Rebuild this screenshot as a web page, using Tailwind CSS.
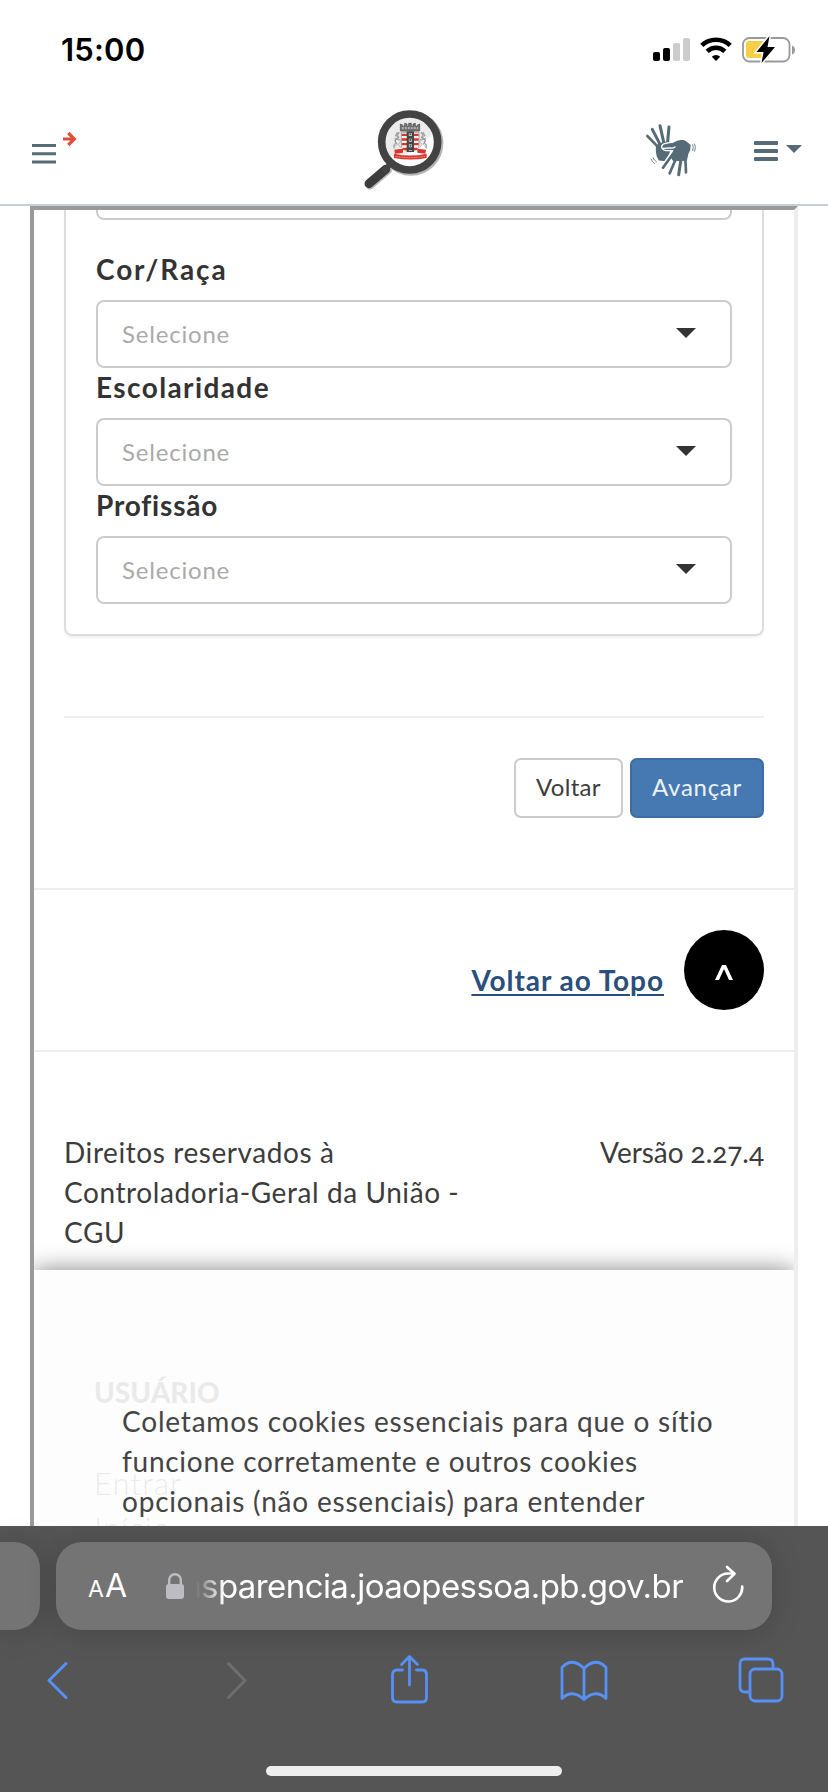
<!DOCTYPE html>
<html lang="pt-BR">
<head>
<meta charset="utf-8">
<title>Transparência</title>
<script src="https://cdn.jsdelivr.net/npm/@tailwindcss/browser@4"></script>
</head>
<body class="w-[828px] h-[1792px] overflow-hidden bg-white font-['Lato',sans-serif] text-[28px] text-[#333]">
<div class="flex flex-col h-full">

  <!-- Status bar -->
  <div class="h-[98px] flex justify-between pl-[61px] pr-[33px] shrink-0">
    <div class="font-['Inter',sans-serif] font-semibold text-[31px] leading-[36px] mt-[32px] text-black tracking-[0.2px]">15:00</div>
    <div class="flex gap-[10px] mt-[36px]">
      <svg class="w-[37px] h-[26px]" viewBox="0 0 37 26"><g><rect x="0" y="16" width="7" height="9" rx="2"/><rect x="10" y="12" width="7" height="13" rx="2"/><rect x="20" y="7" width="7" height="18" rx="2" fill="#ccc"/><rect x="30" y="2" width="7" height="23" rx="2" fill="#ccc"/></g></svg>
      <svg class="w-[32px] h-[26px]" viewBox="0 0 32 26" fill="none" stroke="#000" stroke-width="4.6"><path d="M1.8 9.400a20.500 20.500 0 0 1 28.400 0"/><path d="M7.200 15.400a12.600 12.600 0 0 1 17.600 0"/><path d="M16 25l-4.200-4.200a6 6 0 0 1 8.400 0z" fill="#000" stroke="none"/></svg>
      <svg class="w-[53px] h-[28px]" viewBox="0 0 53 28"><rect x="1" y="2" width="46.500" height="23.500" rx="6.500" fill="none" stroke="#999" stroke-width="1.800"/><path d="M50 9.500q3 1 3 4.500t-3 4.500z" fill="#999"/><path d="M7 5h20v17H7q-3 0-3-3V8q0-3 3-3z" fill="#f7ce46"/><path d="M27.500 0L14.500 16h7L19.500 27 33 11h-7.500z" stroke="#fff" stroke-width="3"/><path d="M27.500 0L14.500 16h7L19.500 27 33 11h-7.500z"/></svg>
    </div>
  </div>

  <!-- Site header -->
  <header class="h-[108px] border-b-2 border-[#c5d0d6] flex items-start pl-[32px] pr-[26px] shrink-0">
    <div class="flex gap-[7px] w-[331px]">
      <svg class="w-[24px] h-[22px] mt-[45px]" viewBox="0 0 24 22" fill="#566b78"><path d="M0 1h24v3H0zM0 9.200h24v3H0zM0 17.500h24v3H0z"/></svg>
      <svg class="w-[14px] h-[16px] mt-[33px]" viewBox="0 0 14 16" fill="none" stroke="#e04f3c" stroke-width="3.200"><path d="M0 8h11M5.300 2l6 6-6 6"/></svg>
    </div>
    <svg class="w-[84px] h-[84px] mt-[10px]" viewBox="38 24 252 252">
      <path d="M59 256L112 210" stroke="#bbb" stroke-width="26" stroke-linecap="round"/>
      <circle cx="182" cy="130" r="85" fill="none" stroke="#b5b5b5" stroke-width="24"/>
      <circle cx="179" cy="126" r="78" fill="#ececec"/>
      <path d="M110 165q70 20 140-70v50a74 74 0 0 1-140 20z" fill="#fff"/>
      <path d="M56 251L106 208" stroke="#3d3d3d" stroke-width="27" stroke-linecap="round"/>
      <path d="M98 212L124 190" stroke="#444" stroke-width="16"/>
      <circle cx="178" cy="126" r="84" fill="none" stroke="#434343" stroke-width="23"/>
      <path d="M150 93V72l7 3v5l6-3v-7l7 2v7h5v-9h8v9h5v-7l7-2v7l6 3v-5l7-3v21z" fill="#777" stroke="#444" stroke-width="2"/>
      <path d="M155 84h48" stroke="#eee" stroke-width="3" stroke-dasharray="5 4"/>
      <path d="M153 97h53v38q0 17-26 20-27-3-27-20z" fill="#fff" stroke="#555" stroke-width="1.500"/>
      <path d="M154 101h51v7h-51zM154 115h51v7h-51zM154 129h51v7h-51zM158 143h43v7h-43z" fill="#df3428"/>
      <path d="M169 94h22v62h-22z" fill="#464646"/>
      <path d="M180 99v54" stroke="#ddd" stroke-width="9" stroke-dasharray="9 8"/>
      <path d="M180 100v52" stroke="#555" stroke-width="5" stroke-dasharray="6 11"/>
      <g fill="none" stroke="#aaa" stroke-width="4"><path d="M148 98q-10 4-3 14-15 5-8 18-10 5-5 15M141 96l-6 13M150 120l-17-5"/><path d="M211 98q10 4 3 14 15 5 8 18 10 5 5 15M218 96l6 13M209 120l17-5"/></g>
      <g fill="none" stroke="#666" stroke-width="1.300"><path d="M146 96l-9 12 9 4-13 9 8 12-9 8M152 123l-8 10 7 10"/><path d="M213 96l9 12-9 4 13 9-8 12 9 8M207 123l8 10-7 10"/></g>
      <path d="M132 149l26-3v12l-24 3zM227 149l-26-3v12l24 3z" fill="#d9352b"/>
      <path d="M131 161q49 11 98 0v13q-49 9-98 0z" fill="#d9352b"/><path d="M136 169q44 8 88 0" fill="none" stroke="#f4b5b0" stroke-width="3" stroke-dasharray="3 2"/>
    </svg>
    <div class="flex items-start ml-auto">
      <svg class="w-[52px] h-[54px] mt-[25px]" viewBox="45 38 156 162" stroke-linecap="round" stroke-linejoin="round">
        <g stroke="#566b78" fill="#566b78" stroke-width="8"><path d="M92 118L52 77"/><path d="M95 112L67 57" stroke-width="9"/><path d="M104 108L90 46" stroke-width="9"/><path d="M112 104L117 50" stroke-width="9"/><path d="M80 106l18-8 18-2 10 12-8 30-12 12-18-2q-8-12-8-26z" stroke-width="5"/></g>
        <g stroke="#fff" fill="#fff" stroke-width="12"><path d="M99 109q1-5 8-6l23-4q16-10 26-8 8-1 13 5l11 9q1 14-7 26l-4 18-38 2-10-12 8-22-20 0q-10-3-10-8z"/><path d="M128 130L99 172" stroke-width="16"/></g>
        <g stroke="#566b78" fill="#566b78" stroke-width="8"><path d="M99 109q1-5 8-6l23-4q16-10 26-8 8-1 13 5l11 9q1 14-7 26l-4 18-38 2-8-12 11-22-25 0q-10-3-10-8z" stroke-width="4"/><path d="M128 132L99 172M139 142l-20 47" stroke-width="8"/><path d="M153 147l-7 46" stroke-width="9"/><path d="M166 142l2 44"/></g>
        <path d="M98 114l23-1q9 1 14-3" fill="none" stroke="#fff" stroke-width="4"/>
        <path d="M63 146q3 9 11 14M69 142q3 8 10 12M188 103q4 8 0 18M194 101q5 10 0 22" fill="none" stroke="#566b78" stroke-width="2.500"/>
      </svg>
      <svg class="w-[24px] h-[22px] mt-[42px] ml-[57px]" viewBox="0 0 24 22" fill="#566b78"><rect y="1" width="24" height="4" rx="1"/><rect y="9" width="24" height="4" rx="1"/><rect y="17" width="24" height="4" rx="1"/></svg>
      <svg class="w-[16px] h-[8px] mt-[47px] ml-[8px]" viewBox="0 0 16 8" fill="#566b78"><path d="M0 0h16L8 8z"/></svg>
    </div>
  </header>

  <!-- Embedded page -->
  <main class="relative h-[1320px] ml-[30px] w-[768px] overflow-hidden border-4 border-b-0 border-t-[#9a9a9a] border-l-[#9a9a9a] border-r-[#eee] shrink-0">
    <section class="mx-[30px] h-[426px] px-[30px] border-2 border-t-0 border-[#ddd] rounded-b-[8px] shadow-[0_2px_2px_rgba(0,0,0,0.05)]">
      <div class="h-[10px] border-2 border-t-0 border-[#ccc] rounded-b-[8px]"></div>
      <div class="pt-[30px]">
        <label class="block h-[50px] leading-[38px] font-bold"><span class="tracking-[1.9px]">Cor/Raça</span></label>
        <div class="h-[68px] border-2 border-[#ccc] rounded-[8px] pl-[24px] pr-[34px] flex items-center justify-between text-[24px] text-[#aaa]"><span class="tracking-[0.8px]">Selecione</span><svg class="w-[20px] h-[10px] -mt-[2px]" viewBox="0 0 20 10"><path d="M0 0h20L10 10z" fill="#333"/></svg></div>
        <label class="block h-[50px] leading-[38px] font-bold"><span class="tracking-[1.400px]">Escolaridade</span></label>
        <div class="h-[68px] border-2 border-[#ccc] rounded-[8px] pl-[24px] pr-[34px] flex items-center justify-between text-[24px] text-[#aaa]"><span class="tracking-[0.8px]">Selecione</span><svg class="w-[20px] h-[10px] -mt-[2px]" viewBox="0 0 20 10"><path d="M0 0h20L10 10z" fill="#333"/></svg></div>
        <label class="block h-[50px] leading-[38px] font-bold"><span class="tracking-[0.8px]">Profissão</span></label>
        <div class="h-[68px] border-2 border-[#ccc] rounded-[8px] pl-[24px] pr-[34px] flex items-center justify-between text-[24px] text-[#aaa]"><span class="tracking-[0.8px]">Selecione</span><svg class="w-[20px] h-[10px] -mt-[2px]" viewBox="0 0 20 10"><path d="M0 0h20L10 10z" fill="#333"/></svg></div>
      </div>
    </section>

    <div class="mx-[30px] mt-[80px] border-t-2 border-[#eee] pt-[40px] flex justify-end gap-[7px] text-[24px] h-[172px]">
      <button class="w-[109px] h-[60px] pb-[2px] border-2 border-[#ccc] rounded-[7px] tracking-[0.3px] text-[#3c3c3c]">Voltar</button>
      <button class="w-[134px] h-[60px] pb-[2px] border-2 border-[#3f6ca5] bg-[#4678b2] text-white/90 rounded-[7px] tracking-[0.7px]">Avançar</button>
    </div>

    <div class="border-y-2 border-[#eee] h-[164px] px-[30px] flex items-center justify-end gap-[20px]">
      <a class="font-bold text-[#2a4f7c] underline decoration-2 underline-offset-[3px] mt-[20px] tracking-[0.95px]">Voltar ao Topo</a>
      <div class="size-[80px] rounded-full bg-black flex items-center justify-center"><svg class="w-[18px] h-[15px] mt-[4px]" viewBox="0 0 18 15"><path d="M0 15L7 0h4l7 15h-4L9 4 4 15z" fill="#fff"/></svg></div>
    </div>

    <footer class="px-[30px] pt-[80px] flex justify-between leading-[40px] text-[#3c3c3c]">
      <p class="tracking-[0.58px] whitespace-nowrap">Direitos reservados à<br>Controladoria-Geral da União -<br>CGU</p>
      <p class="tracking-[-0.05px] oldstyle-nums">Versão 2.27.4</p>
    </footer>
    <div class="pl-[60px] pt-[120px] leading-[40px]">
      <h3 class="font-black">USUÁRIO</h3>
      <div class="text-[31px] font-light text-[#333] leading-[45px] tracking-[1.100px] pt-[49px]">Entrar<br>Início</div>
    </div>

    <!-- Cookie notice -->
    <div class="absolute left-0 right-0 top-[1060px] h-[500px] bg-[#fdfdfd]/91 shadow-[0_-1px_22px_rgba(0,0,0,0.45)] pl-[88px] pt-[131px] leading-[40px] text-[#444] whitespace-nowrap">
      <p class="tracking-[0.8px]">Coletamos cookies essenciais para que o sítio</p>
      <p class="tracking-[0.73px]">funcione corretamente e outros cookies</p>
      <p class="tracking-[0.8px]">opcionais (não essenciais) para entender</p>
    </div>
  </main>

  <!-- Browser toolbar -->
  <div class="h-[266px] bg-[#555] shrink-0 flex flex-col pt-[16px] font-['Inter',sans-serif]">
    <div class="flex gap-[16px]">
      <div class="w-[40px] h-[88px] bg-[#747474] rounded-r-[26px] shadow-[0_2px_30px_rgba(0,0,0,0.18)]"></div>
      <div class="w-[716px] h-[88px] bg-[#747474] rounded-[26px] shadow-[0_2px_30px_rgba(0,0,0,0.18)] flex items-center text-white pl-[32px]">
        <div class="w-[78px] flex items-baseline gap-[1px] leading-[40px] mt-[3px]"><span class="text-[23px]">A</span><span class="text-[32px]">A</span></div>
        <svg class="w-[18px] h-[26px]" viewBox="0 0 18 26"><rect y="11" width="18" height="15" rx="3" fill="#bdbcc2"/><path d="M3.200 12V7a5.800 5.800 0 0 1 11.600 0v5" fill="none" stroke="#bdbcc2" stroke-width="2.400"/></svg>
        <div class="ml-[12px] w-[487px] overflow-hidden flex justify-end text-[33px] leading-[44px] tracking-[-0.58px] [mask-image:linear-gradient(to_right,transparent,black_28px)]"><span class="whitespace-nowrap">nsparencia.joaopessoa.pb.gov.br</span></div>
        <svg class="w-[32px] h-[38px] ml-[29px] -mt-[5px]" viewBox="0 0 32 38" fill="none" stroke="#fff" stroke-width="2.600" stroke-linecap="round" stroke-linejoin="round"><path d="M30.200 21.500A14 14 0 1 1 16 8.500h6"/><path d="M15 2l7.500 6.800L15 16"/></svg>
      </div>
    </div>
    <div class="flex items-start h-[136px] pt-[23px] pl-[46px]">
      <svg class="w-[22px] h-[38px] mt-[8px]" viewBox="0 0 22 38" fill="none" stroke="#5790f6" stroke-width="3" stroke-linecap="round" stroke-linejoin="round"><path d="M20 2.500L3 19.500l17 17"/></svg>
      <svg class="w-[22px] h-[38px] mt-[8px] ml-[158px]" viewBox="0 0 22 38" fill="none" stroke="#6e6e6e" stroke-width="3" stroke-linecap="round" stroke-linejoin="round"><path d="M2.500 2.500L19 19.500l-16.500 17"/></svg>
      <svg class="w-[40px] h-[50px] mt-[1px] ml-[142px]" viewBox="0 0 40 50" fill="none" stroke="#5790f6" stroke-width="2.800" stroke-linecap="round" stroke-linejoin="round"><path d="M12.500 16H7q-4.500 0-4.500 4.500v23q0 4.500 4.500 4.500h25q4.500 0 4.500-4.500v-23Q36.500 16 32 16h-5.500M19.500 31V3M11.500 10.500l8-8 8 8"/></svg>
      <svg class="w-[48px] h-[42px] mt-[7px] ml-[130px]" viewBox="0 0 48 42" fill="none" stroke="#5790f6" stroke-width="2.800" stroke-linejoin="round"><path d="M24 8.500Q12-3.500 2 7.500v31q10-10 22 1zM24 8.500Q36-3.500 46 7.500v31q-10-10-22 1z"/></svg>
      <svg class="w-[46px] h-[46px] mt-[4px] ml-[130px]" viewBox="0 0 46 46" fill="none" stroke="#5790f6" stroke-width="2.800"><path d="M11.500 35H7q-5 0-5-5V7q0-5 5-5h23q5 0 5 5v5"/><rect x="12" y="12" width="32" height="32" rx="5"/></svg>
    </div>
    <div class="mx-auto w-[296px] h-[10px] rounded-full bg-[#eee]"></div>
  </div>
</div>
</body>
</html>
